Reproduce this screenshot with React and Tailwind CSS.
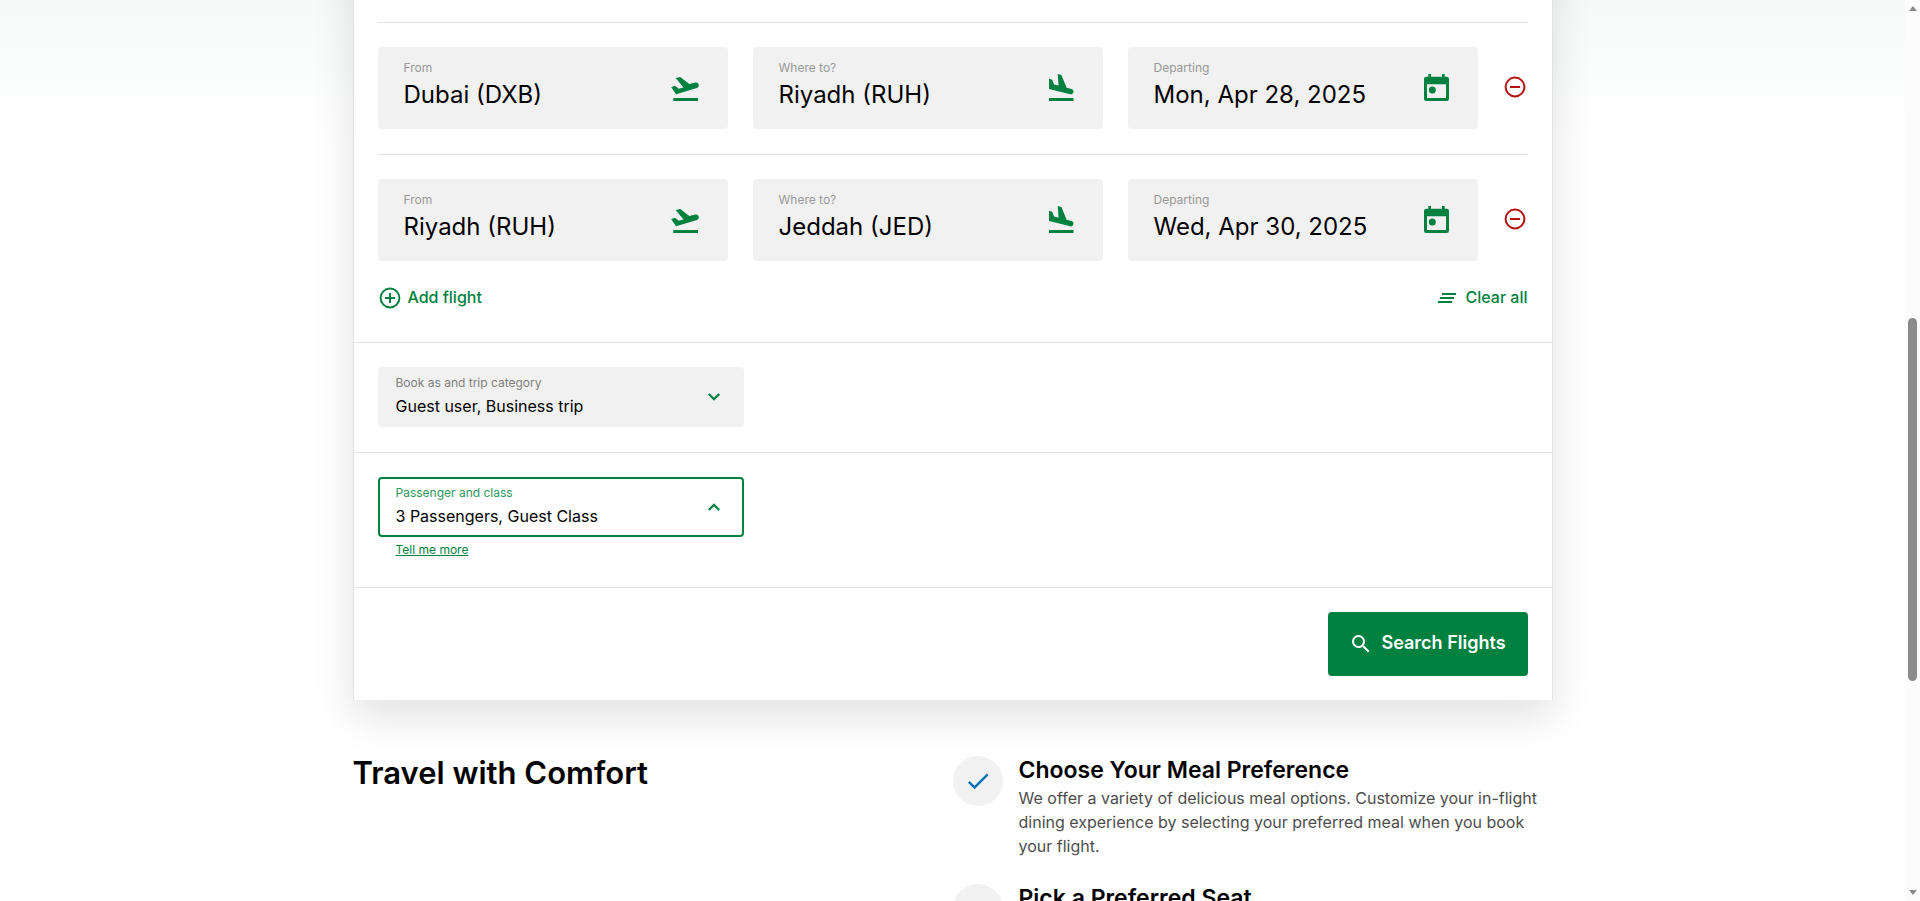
import React from "react";
import { MdCheck, MdSearch, MdClearAll } from "react-icons/md";

function TakeoffIcon() {
  return (
    <svg viewBox="0 0 28 24" fill="currentColor" className="h-6 w-7" aria-hidden="true">
      <path d="M.2 10.200 3.800 8.800l4 2.900 4.700-1.300L4.700 1 9.300 0l9 7.100 6.200-1.600a2.800 2.800 0 0 1 1.400 5.400L5.100 17.200z" />
      <path d="M2.300 21H27v3H2.300z" />
    </svg>
  );
}

function LandingIcon() {
  return (
    <svg viewBox="0 0 25 27" fill="currentColor" className="h-[27px] w-[25px]" aria-hidden="true">
      <path d="M0 4.800l3.200.9 1.800 4.700 4.600 1.200L8.700 0l3.700 1.100 5.200 12.600 5.100 1.400a2.700 2.700 0 0 1-1.400 5.200L0 14.900z" />
      <path d="M0 24h24.500v3H0z" />
    </svg>
  );
}

function CalendarIcon() {
  return (
    <svg viewBox="0 0 25 27" fill="none" className="h-[27px] w-[25px]" aria-hidden="true">
      <path
        fill="currentColor"
        fillRule="evenodd"
        d="M4.300 0H7v2.700h11V0h2.700v2.700h2.100A2.200 2.200 0 0 1 25 4.900v19.900a2.200 2.200 0 0 1-2.200 2.200H2.200A2.200 2.200 0 0 1 0 24.800V4.900a2.200 2.200 0 0 1 2.200-2.200h2.100zM3 10.300V24h19V10.300z"
      />
      <circle cx="8.300" cy="16" r="3.500" fill="currentColor" />
    </svg>
  );
}

function CircleIcon({ plus, className }) {
  return (
    <svg viewBox="0 0 24 24" fill="none" stroke="currentColor" strokeWidth="2" className={className} aria-hidden="true">
      <circle cx="12" cy="12" r="9.400" />
      <path d={plus ? "M7 12h10M12 7v10" : "M7 12h10"} />
    </svg>
  );
}

function Field({ id, label, value, icon }) {
  return (
    <div className="flex h-[82px] flex-1 items-center justify-between rounded bg-[#f1f1f1] pl-[26px] pr-[29px]">
      <div className="min-w-0 flex-1 pb-1">
        <label htmlFor={id} className="block text-[12px] leading-4 text-[#999999]">
          {label}
        </label>
        <input id={id} defaultValue={value} className="block h-9 w-full bg-transparent pt-0.5 text-[24px] text-black outline-none" />
      </div>
      <span className="flex h-[26px] items-end text-[#008140]">{icon}</span>
    </div>
  );
}

function FlightRow({ n, from, to, date }) {
  return (
    <div className="flex items-center gap-[25px] border-t border-[#e2e2e2] pt-6 pb-[25px]">
      <Field id={`from-${n}`} label="From" value={from} icon={<TakeoffIcon />} />
      <Field id={`to-${n}`} label="Where to?" value={to} icon={<LandingIcon />} />
      <Field id={`date-${n}`} label="Departing" value={date} icon={<CalendarIcon />} />
      <button type="button" aria-label="Remove flight" className="flex w-[25px] justify-center pb-0.5 text-[#b40f0f]">
        <CircleIcon className="size-6" />
      </button>
    </div>
  );
}

function SelectBox({ id, label, value, open }) {
  return (
    <div
      className={
        open
          ? "relative h-[60px] w-[366px] rounded border-2 border-[#008140] bg-white"
          : "relative h-[60px] w-[366px] rounded border-2 border-[#f1f1f1] bg-[#f1f1f1]"
      }
    >
      <label
        htmlFor={id}
        className={open ? "absolute left-4 top-1 text-[12px] leading-5 text-[#2c9a5c]" : "absolute left-4 top-1 text-[12px] leading-5 text-[#808080]"}
      >
        {label}
      </label>
      <select id={id} className="h-full w-full appearance-none bg-transparent pl-4 pt-[18px] text-[16px] text-black outline-none">
        <option>{value}</option>
      </select>
      <svg viewBox="0 0 12 8" fill="none" stroke="#008140" strokeWidth="2.300" className="pointer-events-none absolute right-[22px] top-6 h-2 w-3" aria-hidden="true">
        <path d={open ? "M.8 7 6 1.800 11.200 7" : "M.8 1 6 6.200 11.200 1"} />
      </svg>
    </div>
  );
}

function Perk({ title, children }) {
  return (
    <li className="flex gap-4">
      <span className="flex size-[50px] shrink-0 items-center justify-center rounded-full bg-[#f1f1f1]">
        <MdCheck className="size-7 text-[#0073b7]" />
      </span>
      <div>
        <h3 className="text-[23px] font-semibold leading-7 text-black">{title}</h3>
        <p className="mt-0.5 text-[16px] leading-6 text-[#4d4d4d]">{children}</p>
      </div>
    </li>
  );
}

export default function App() {
  return (
    <div className="flex h-screen overflow-hidden bg-white font-['Inter',sans-serif]">
      <main className="min-w-0 flex-1 bg-[linear-gradient(#f5faf9,#fafcfb_60px,#ffffff_140px)]">
        <div className="mx-auto max-w-[1200px]">
          <form className="-mt-16 border border-b-0 border-[#e2e2e2] bg-white pt-[85px] shadow-[0_16px_40px_rgba(0,0,0,0.12)]">
            <div className="px-6">
              <FlightRow n={1} from="Dubai (DXB)" to="Riyadh (RUH)" date="Mon, Apr 28, 2025" />
              <FlightRow n={2} from="Riyadh (RUH)" to="Jeddah (JED)" date="Wed, Apr 30, 2025" />
              <div className="-mt-px flex items-start justify-between pb-[31px] text-[16px] font-medium leading-6 text-[#008140]">
                <button type="button" className="flex items-center gap-1.5">
                  <CircleIcon plus className="size-6" />
                  <span className="pb-0.5">Add flight</span>
                </button>
                <button type="button" className="flex items-center gap-1.5">
                  <MdClearAll className="size-6" />
                  <span className="pb-0.5">Clear all</span>
                </button>
              </div>
            </div>
            <div className="border-t border-[#e2e2e2] px-6 pt-6 pb-[25px]">
              <SelectBox id="trip" label="Book as and trip category" value="Guest user, Business trip" />
            </div>
            <div className="border-t border-[#e2e2e2] px-6 pt-6 pb-7">
              <SelectBox id="passengers" label="Passenger and class" value="3 Passengers, Guest Class" open />
              <a href="#more" className="ml-[18px] mt-1 block w-fit text-[12px] leading-[18px] text-[#008140] underline">
                Tell me more
              </a>
            </div>
            <div className="flex justify-end border-t border-[#e2e2e2] p-6">
              <button type="submit" className="flex h-16 w-[200px] items-center justify-center gap-2 rounded bg-[#008140] text-[18px] font-semibold text-white">
                <MdSearch className="size-6" />
                <span className="pb-1">Search Flights</span>
              </button>
            </div>
          </form>
          <section className="mt-14 grid grid-cols-2">
            <h2 className="text-[31px] font-semibold leading-[34px] text-black">Travel with Comfort</h2>
            <ul className="flex flex-col gap-[26px]">
              <Perk title="Choose Your Meal Preference">
                We offer a variety of delicious meal options. Customize your in-flight dining experience by selecting your preferred meal when you book your flight.
              </Perk>
              <Perk title="Pick a Preferred Seat" />
            </ul>
          </section>
        </div>
      </main>
      <div className="flex w-[15px] flex-col items-center bg-[#fcfcfc] py-1.5" aria-hidden="true">
        <svg viewBox="0 0 8 5" className="h-[5px] w-2"><path fill="#8b8b8b" d="M0 5l4-5 4 5z" /></svg>
        <div className="flex-[307]" />
        <div className="w-[9px] flex-[363] rounded-full bg-[#8b8b8b]" />
        <div className="flex-[209]" />
        <svg viewBox="0 0 8 5" className="h-[5px] w-2"><path fill="#8b8b8b" d="M0 0l4 5 4-5z" /></svg>
      </div>
    </div>
  );
}
